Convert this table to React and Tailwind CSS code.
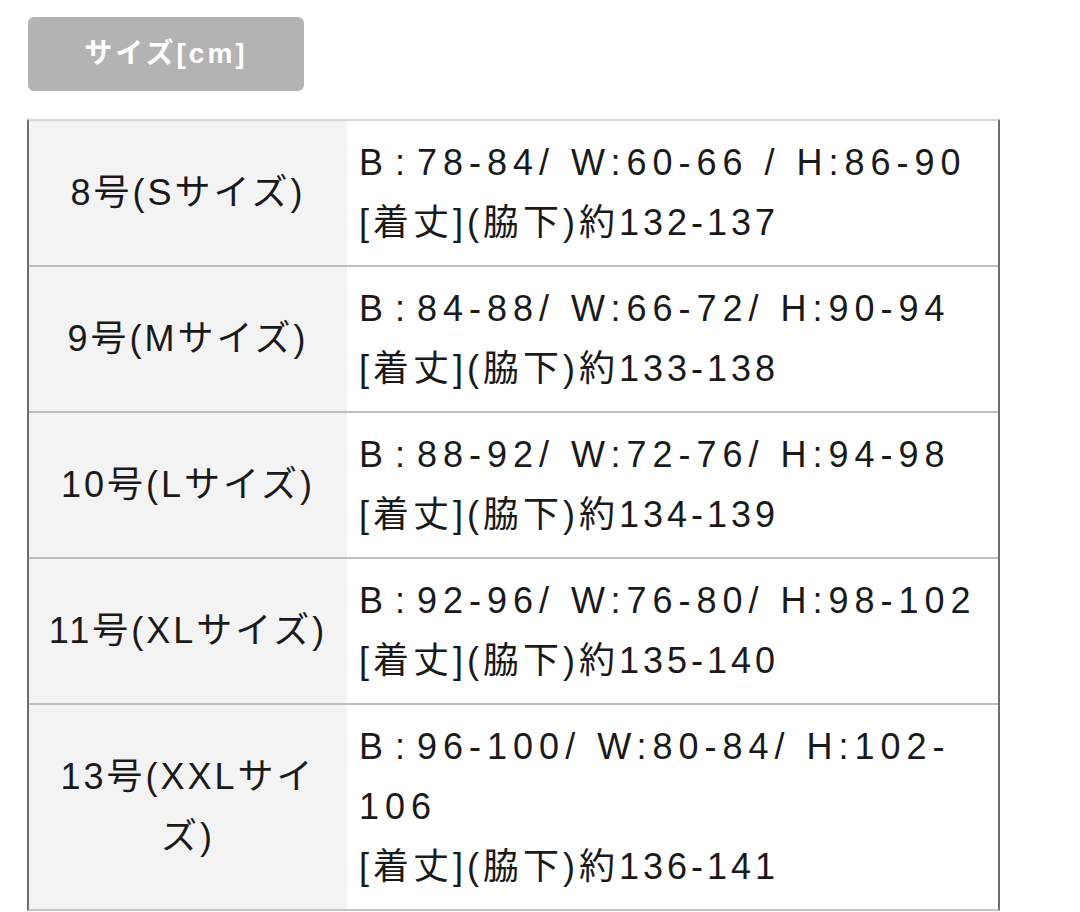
import React from "react";

const rows = [
  { size: "8号(Sサイズ)", b: ["78-84/ W:60-66 / H:86-90"], l: "[着丈](脇下)約132-137" },
  { size: "9号(Mサイズ)", b: ["84-88/ W:66-72/ H:90-94"], l: "[着丈](脇下)約133-138" },
  { size: "10号(Lサイズ)", b: ["88-92/ W:72-76/ H:94-98"], l: "[着丈](脇下)約134-139" },
  { size: "11号(XLサイズ)", b: ["92-96/ W:76-80/ H:98-102"], l: "[着丈](脇下)約135-140" },
  { size: "13号(XXLサイズ)", b: ["96-100/ W:80-84/ H:102-", "106"], l: "[着丈](脇下)約136-141" },
];

export default function App() {
  return (
    <div
      className="w-[1080px] h-[912px] bg-white text-[#1a1a1a] overflow-hidden"
      style={{ fontFamily: '"Liberation Sans", "Noto Sans CJK JP", sans-serif' }}
    >
      <div className="pt-[17px] pl-[28px]">
        <div className="w-[276px] h-[74px] rounded-[6px] bg-[#b3b3b3] flex items-center justify-center text-white font-bold text-[28px] tracking-[3px]">
          サイズ[cm]
        </div>
      </div>
      <div className="ml-[27px] mt-[28px] w-[973px] border-l-2 border-r-2 border-l-[#6e6e6e] border-r-[#6e6e6e] border-t-2 border-t-[#d6d6d6] border-b-2 border-b-[#c4c4c4]">
        {rows.map((r, i) => (
          <div
            key={i}
            className={"flex " + (i > 0 ? "border-t-2 border-t-[#bdbdbd]" : "")}
          >
            <div className="w-[318px] shrink-0 bg-[#f3f3f3] flex items-center justify-center px-[16px] text-center text-[36px] leading-[60px] tracking-[3px]">
              {r.size}
            </div>
            <div className="flex-1 pl-[12px] pr-[12px] py-[12px] text-[36px] leading-[60px]">
              <div className="tracking-[6px] whitespace-nowrap">
                <span className="tracking-[1px]">B : </span>
                {r.b[0]}
              </div>
              {r.b.slice(1).map((t, k) => (
                <div key={k} className="tracking-[6px]">{t}</div>
              ))}
              <div className="tracking-[4px]">{r.l}</div>
            </div>
          </div>
        ))}
      </div>
    </div>
  );
}
